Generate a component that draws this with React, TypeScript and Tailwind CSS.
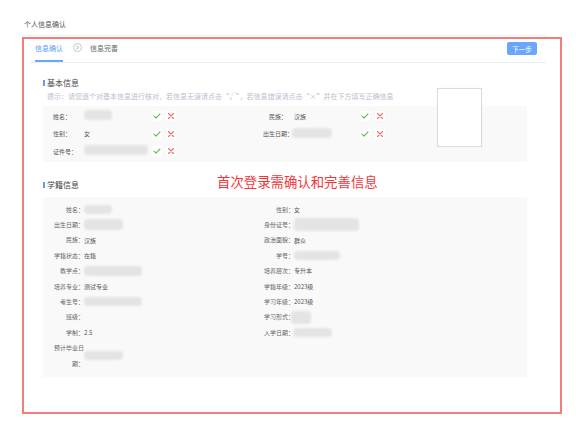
import React from 'react';

type Cell = { label: string; value?: string; blur?: string };

const Blur = ({ className }: { className: string }) => (
  <span className={`inline-block rounded-[4px] bg-[#e4e4e4] blur-[1px] ${className}`} />
);

const CheckBtn = () => (
  <span className="flex h-[10px] w-[10px] items-center justify-center rounded-[1px] bg-white">
    <svg width="8" height="8" viewBox="0 0 8 8" fill="none">
      <path d="M1 4.2L3.1 6.2L7 1.8" stroke="#5cb85c" strokeWidth="1.1" strokeLinecap="round" strokeLinejoin="round" />
    </svg>
  </span>
);

const CrossBtn = () => (
  <span className="flex h-[10px] w-[10px] items-center justify-center rounded-[1px] bg-white">
    <svg width="8" height="8" viewBox="0 0 8 8" fill="none">
      <path d="M1.5 1.5L6.5 6.5M6.5 1.5L1.5 6.5" stroke="#f56c6c" strokeWidth="1.1" strokeLinecap="round" />
    </svg>
  </span>
);

const leftRows: Cell[] = [
  { label: '姓名：', blur: 'w-[28px] h-[9px]' },
  { label: '出生日期：', blur: 'w-[39px] h-[11px]' },
  { label: '民族：', value: '汉族' },
  { label: '学籍状态：', value: '在籍' },
  { label: '教学点：', blur: 'w-[58px] h-[10px]' },
  { label: '培养专业：', value: '测试专业' },
  { label: '考生号：', blur: 'w-[58px] h-[9px]' },
  { label: '班级：' },
  { label: '学制：', value: '2.5' },
  { label: '预计毕业日期：', blur: 'w-[39px] h-[9px]' },
];

const rightRows: Cell[] = [
  { label: '性别：', value: '女' },
  { label: '身份证号：', blur: 'w-[65px] h-[13px]' },
  { label: '政治面貌：', value: '群众' },
  { label: '学号：', blur: 'w-[46px] h-[9px]' },
  { label: '培养层次：', value: '专升本' },
  { label: '学籍年级：', value: '2023级' },
  { label: '学习年级：', value: '2023级' },
  { label: '学习形式：', blur: 'w-[20px] h-[13px] -ml-[3px]' },
  { label: '入学日期：', blur: 'w-[39px] h-[9px] -ml-[1px]' },
];

const InfoCell = ({ cell }: { cell?: Cell }) => {
  if (!cell) return <div />;
  return (
    <div className="flex items-center pl-[10px]">
      <span className="w-[31px] shrink-0 text-right leading-[15.4px] text-[#666]">{cell.label}</span>
      {cell.blur ? <Blur className={cell.blur} /> : <span className="text-[#555]">{cell.value}</span>}
    </div>
  );
};

const SectionTitle = ({ text }: { text: string }) => (
  <div className="flex h-[10px] items-center gap-[2px]">
    <span className="h-[6px] w-[2px] bg-[#5b9dfb]" />
    <span className="text-[8px] leading-[10px] text-[#444]">{text}</span>
  </div>
);

export default function App() {
  return (
    <div className="h-[425px] w-[576px] overflow-hidden bg-white font-['Noto_Sans_CJK_SC','Liberation_Sans',sans-serif]">
      <div className="ml-[22px] h-[36px] w-[524px] border-b border-[#f0f0f0] pl-[2px] pt-[19px] text-[7px] leading-[10px] text-[#555]">
        个人信息确认
      </div>

      <div className="relative ml-[22px] mt-[1px] h-[377px] w-[540px] border-2 border-[#f27d7d]">
        {/* tabs */}
        <div className="ml-[6px] flex h-[24px] w-[516px] items-start border-b border-[#eeeeee] pl-[5px] text-[7px] leading-[10px]">
          <div className="h-full border-b-2 border-[#6aa7fc] pt-[4px] text-[#5b9dfb]">信息确认</div>
          <span className="ml-[10px] mt-[4px] flex h-[9px] w-[9px] items-center justify-center rounded-full border border-[#c8c8c8]">
            <svg width="5" height="5" viewBox="0 0 5 5" fill="none">
              <path d="M1.7 0.9L3.3 2.5L1.7 4.1" stroke="#9a9a9a" strokeWidth="0.9" strokeLinecap="round" strokeLinejoin="round" />
            </svg>
          </span>
          <div className="ml-[8px] pt-[4px] text-[#666]">信息完善</div>
          <button className="ml-auto mr-[9px] mt-[3px] flex h-[13px] w-[30px] items-center justify-center rounded-[2px] bg-[#6aa7fc] text-[6.5px] text-white">
            下一步
          </button>
        </div>

        {/* 基本信息 */}
        <div className="ml-[19px] w-[484px]">
          <div className="mt-[15px]">
            <SectionTitle text="基本信息" />
          </div>
          <div className="mt-[2.5px] whitespace-nowrap pl-[4px] text-[7px] leading-[10px] text-[#b9c0cf]">
            提示：请您逐个对基本信息进行核对，若信息无误请点击“√”，若信息错误请点击“×”并在下方填写正确信息
          </div>
          <div className="mt-[5px] h-[56px] bg-[#f9f9f9] pt-[2px] text-[6px]">
            <div className="flex h-[17.5px] items-center">
              <div className="flex w-[215px] items-center pl-[10px]">
                <span className="w-[31px] text-[#555]">姓名：</span>
                <span className="w-[68px]"><Blur className="h-[10px] w-[28px]" /></span>
                <CheckBtn />
                <span className="ml-[4px]"><CrossBtn /></span>
              </div>
              <div className="flex items-center pl-[4px]">
                <span className="w-[32px] text-center text-[#555]">民族：</span>
                <span className="w-[66px] text-[#555]">汉族</span>
                <CheckBtn />
                <span className="ml-[5px]"><CrossBtn /></span>
              </div>
            </div>
            <div className="flex h-[17.5px] items-center">
              <div className="flex w-[215px] items-center pl-[10px]">
                <span className="w-[31px] text-[#555]">性别：</span>
                <span className="w-[68px] text-[#555]">女</span>
                <CheckBtn />
                <span className="ml-[4px]"><CrossBtn /></span>
              </div>
              <div className="flex items-center pl-[4px]">
                <span className="w-[32px] text-center text-[#555]">出生日期：</span>
                <span className="w-[66px]"><Blur className="-ml-[2px] h-[10px] w-[40px]" /></span>
                <CheckBtn />
                <span className="ml-[5px]"><CrossBtn /></span>
              </div>
            </div>
            <div className="flex h-[17.5px] items-center">
              <div className="flex w-[215px] items-center pl-[10px]">
                <span className="w-[31px] text-[#555]">证件号：</span>
                <span className="w-[68px]"><Blur className="h-[10px] w-[64px]" /></span>
                <CheckBtn />
                <span className="ml-[4px]"><CrossBtn /></span>
              </div>
            </div>
          </div>

          {/* 学籍信息 */}
          <div className="mt-[18.5px]">
            <SectionTitle text="学籍信息" />
          </div>
          <div className="mt-[6.5px] grid h-[180px] grid-cols-[210px_1fr] content-start bg-[#f9f9f9] pt-[5px] text-[6px]">
            {leftRows.map((cell, i) => (
              <React.Fragment key={cell.label}>
                <InfoCell cell={cell} />
                <InfoCell cell={rightRows[i]} />
              </React.Fragment>
            ))}
          </div>
        </div>

        {/* photo */}
        <div className="absolute left-[413px] top-[49px] h-[59px] w-[45px] border border-[#dcdcdc] bg-white shadow-[0_0_1px_rgba(0,0,0,0.08)]" />

        {/* annotation */}
        <div className="absolute left-[193px] top-[134px] whitespace-nowrap text-[13.4px] leading-[16px] text-[#f2353b]">
          首次登录需确认和完善信息
        </div>
      </div>
    </div>
  );
}
